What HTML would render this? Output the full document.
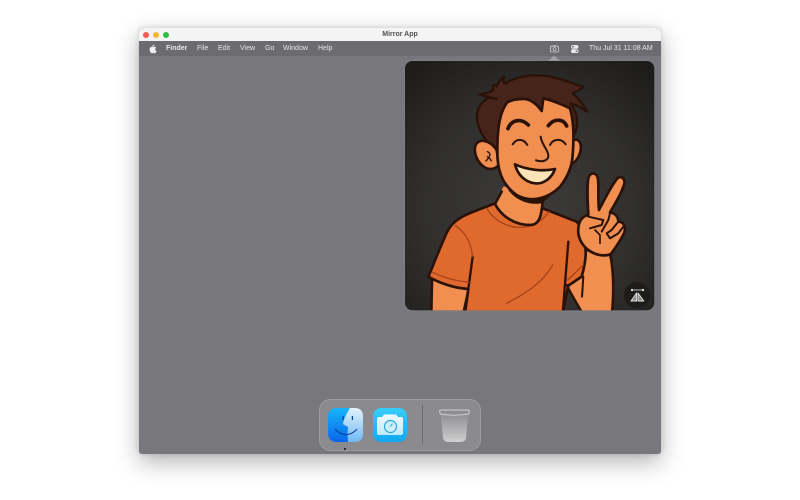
<!DOCTYPE html>
<html><head><meta charset="utf-8">
<style>
html,body{margin:0;padding:0;background:#fff;width:800px;height:500px;overflow:hidden}
body{font-family:"Liberation Sans",sans-serif;position:relative}
#win{position:absolute;left:139px;top:28px;width:522px;height:426px;border-radius:5px 5px 3px 3px;box-shadow:0 8px 24px rgba(0,0,0,.3),0 0 6px rgba(0,0,0,.14);background:#77777c;overflow:hidden}
#title{position:absolute;left:0;top:0;width:522px;height:13px;background:#f4f4f4;text-align:center;font-size:7px;line-height:13px;font-weight:bold;color:#505050}
.dot{position:absolute;top:3.500px;width:6.500px;height:6.500px;border-radius:50%}
#bar{position:absolute;left:0;top:13px;width:522px;height:15px;background:#6b6b70}
.m{position:absolute;top:0;line-height:15px;font-size:7px;color:#e6e6e6;white-space:nowrap}
svg{position:absolute;left:0;top:0}
</style></head><body>
<div id="win">
<div id="title">Mirror App
<span class="dot" style="left:3.500px;background:#f25a52"></span>
<span class="dot" style="left:13.500px;background:#f6b52e"></span>
<span class="dot" style="left:23.500px;background:#2cc13f"></span>
</div>
<div id="bar">
<span class="m" style="left:27px;font-weight:bold">Finder</span>
<span class="m" style="left:58px">File</span>
<span class="m" style="left:79px">Edit</span>
<span class="m" style="left:101px">View</span>
<span class="m" style="left:126px">Go</span>
<span class="m" style="left:144px">Window</span>
<span class="m" style="left:179px">Help</span>
<span class="m" style="left:450px">Thu Jul 31 11:08 AM</span>
</div>
</div>
<svg width="800" height="500" viewBox="0 0 800 500">
<defs>
<radialGradient id="bg" cx=".5" cy=".6" r=".72"><stop offset="0" stop-color="#3d3c3a"/><stop offset=".6" stop-color="#302f2d"/><stop offset="1" stop-color="#1e1d1c"/></radialGradient>
<linearGradient id="fl" x1="0" y1="0" x2="0" y2="1"><stop offset="0" stop-color="#18b4fa"/><stop offset="1" stop-color="#0a66ea"/></linearGradient>
<linearGradient id="fr" x1="0" y1="0" x2="0" y2="1"><stop offset="0" stop-color="#e4f2fb"/><stop offset="1" stop-color="#6fbaf4"/></linearGradient>
<linearGradient id="cm" x1="0" y1="0" x2="0" y2="1"><stop offset="0" stop-color="#38cefb"/><stop offset="1" stop-color="#12a8f0"/></linearGradient>
<linearGradient id="cb" x1="0" y1="0" x2="0" y2="1"><stop offset="0" stop-color="#f0fbff"/><stop offset="1" stop-color="#bfeafb"/></linearGradient>
<linearGradient id="tr" x1="0" y1="0" x2="0" y2="1"><stop offset="0" stop-color="#8a8a8e"/><stop offset="1" stop-color="#cfcfd0"/></linearGradient>
<clipPath id="card"><rect x="15" y="18" width="748" height="748" rx="22"/></clipPath>
</defs>
<!-- apple -->
<g transform="translate(152.800 49) scale(.85) translate(-152.800 -49.500)"><path d="M153.900 46.200c.5-.6.8-1.200.7-1.900-.6.100-1.300.4-1.700 1-.3.500-.6 1.200-.5 1.800.6 0 1.100-.3 1.500-.9zM155.700 49.700c0-1.100.9-1.700 1-1.800-.6-.8-1.400-.9-1.700-.9-.7-.1-1.400.4-1.800.4s-1-.4-1.600-.4c-.9 0-1.700.5-2.100 1.200-.9 1.600-.2 3.900.7 5.100.4.600.9 1.300 1.600 1.300.6 0 .9-.4 1.600-.4s1 .4 1.600.4c.7 0 1.100-.6 1.500-1.200.5-.7.700-1.300.7-1.400-.1 0-1.500-.6-1.500-1.800z" fill="#f2f2f2"/></g>
<!-- camera menu icon -->
<rect x="550.500" y="46.200" width="8" height="5.800" rx="1.200" fill="none" stroke="#cfcfd0" stroke-width=".8"/>
<circle cx="554.500" cy="49.100" r="1.500" fill="none" stroke="#cfcfd0" stroke-width=".7"/>
<rect x="552.800" y="45.300" width="3.400" height="1" fill="#cfcfd0"/>
<path d="M548 61L554 55.500L560 61Z" fill="#a2a2a6"/>
<!-- control centre -->
<rect x="571" y="45" width="7.500" height="3.700" rx="1.800" fill="#e8e8e8"/>
<rect x="571" y="49.300" width="7.500" height="3.700" rx="1.800" fill="#e8e8e8"/>
<circle cx="572.900" cy="46.800" r=".9" fill="#6a6a6f"/>
<circle cx="576.600" cy="51.100" r=".9" fill="#6a6a6f"/>

<!-- card -->
<g transform="translate(400 55) scale(.33333)">
<rect x="12" y="15" width="754" height="754" rx="24" fill="#8a8a8f" opacity=".45"/>
<rect x="15" y="18" width="748" height="748" rx="22" fill="url(#bg)"/>
<g clip-path="url(#card)" stroke-linejoin="round" stroke-linecap="round">
<!-- left arm -->
<path d="M96 672L94 775L190 775L208 695Z" fill="#f08f50" stroke="#2a1209" stroke-width="8"/>
<!-- right arm -->
<path d="M500 690C515 720 530 745 548 775L636 775C642 710 642 650 630 595L560 590Z" fill="#f08f50"/>
<!-- shirt -->
<path d="M285 445L215 472C175 488 150 505 135 545C115 590 100 630 85 665C120 685 165 700 205 702L195 775L488 775L505 692L545 665C552 640 558 610 557 590C555 545 545 515 530 500L428 460Z" fill="#e0692d" stroke="#2a1209" stroke-width="8"/>
<path d="M505 560L488 775" stroke="#2a1209" stroke-width="7" fill="none"/>
<path d="M218 605L205 702" stroke="#2a1209" stroke-width="7" fill="none"/>
<path d="M166 512C195 530 215 565 217 605" stroke="#a8431a" stroke-width="4" fill="none"/>
<path d="M98 652C130 668 170 678 207 682" stroke="#a8431a" stroke-width="4" fill="none"/>
<path d="M503 675L550 630" stroke="#a8431a" stroke-width="4" fill="none"/>
<path d="M320 745C380 715 430 680 458 630" stroke="#a8431a" stroke-width="4" fill="none"/>
<path d="M262 462C290 515 390 550 447 470" stroke="#a8431a" stroke-width="4" fill="none"/>
<!-- neck -->
<path d="M310 395L285 447C305 485 345 510 390 510C420 508 425 480 428 440L440 400Z" fill="#f08f50"/>
<path d="M305 410L285 447C305 485 345 510 390 510C418 510 424 485 428 440" fill="none" stroke="#2a1209" stroke-width="8"/>
<path d="M325 405C350 440 395 452 428 444L470 405L340 385Z" fill="#2a1209"/>
<!-- hair back -->
<path d="M290 132L238 118C258 116 270 112 280 106C274 94 280 84 290 94C296 80 304 70 312 64C308 78 310 85 318 85C345 65 390 58 430 62C470 65 515 85 550 96C540 105 528 110 518 115C535 130 552 150 562 170C548 160 530 150 512 145C530 170 538 200 525 235L290 288C258 262 232 225 230 185C232 160 245 140 265 128Z" fill="#47241a" stroke="#2a1209" stroke-width="7"/>
<!-- ears -->
<path d="M290 285C270 255 240 250 228 268C215 295 240 340 270 342C280 342 290 338 297 330Z" fill="#f08f50" stroke="#2a1209" stroke-width="8"/>
<path d="M262 290C275 295 270 305 258 318M262 305C268 308 272 312 274 318" fill="none" stroke="#2a1209" stroke-width="4"/>
<path d="M520 255C538 250 545 265 542 285C538 305 528 322 515 326Z" fill="#f08f50" stroke="#2a1209" stroke-width="8"/>
<!-- face -->
<path d="M322 142C300 170 292 215 292 290C292 335 300 385 350 420C395 445 445 430 480 395C500 370 516 340 518 300C522 250 522 200 510 160C480 145 450 135 430 130L425 168C405 140 385 130 365 132C350 132 335 135 322 142Z" fill="#f08f50" stroke="#2a1209" stroke-width="8"/>
<!-- brows -->
<path d="M324 221C335 192 365 190 385 210" fill="none" stroke="#2a1209" stroke-width="11"/>
<path d="M445 212C462 190 490 190 500 213" fill="none" stroke="#2a1209" stroke-width="11"/>
<!-- eyes -->
<path d="M338 268C350 250 370 250 382 270" fill="none" stroke="#2a1209" stroke-width="6"/>
<path d="M450 270C460 250 485 250 497 268" fill="none" stroke="#2a1209" stroke-width="6"/>
<!-- nose -->
<path d="M422 245C425 270 445 285 445 302C445 318 425 322 408 316" fill="none" stroke="#2a1209" stroke-width="6"/>
<!-- mouth -->
<path d="M345 328C380 345 430 350 465 342C455 370 430 388 405 385C375 382 352 358 345 328Z" fill="#fbe3b8" stroke="#2a1209" stroke-width="8"/>
<!-- right arm outline -->
<path d="M500 690C515 720 530 745 548 775" fill="none" stroke="#2a1209" stroke-width="7"/>
<path d="M550 665L546 725" fill="none" stroke="#2a1209" stroke-width="6"/>
<path d="M636 775C642 710 642 650 630 595" fill="none" stroke="#2a1209" stroke-width="8"/>
<!-- hand -->
<path d="M565 480C563 440 560 400 565 370C570 350 590 350 594 372C597 400 593 435 597 465C615 430 635 390 652 370C665 358 680 375 670 395C660 425 642 450 630 472C645 475 655 485 655 500C670 500 680 515 672 535C660 560 645 580 632 598C610 605 585 600 565 585C545 570 532 545 535 520C537 495 550 482 565 480Z" fill="#f08f50" stroke="#2a1209" stroke-width="8"/>
<path d="M565 485L610 495L605 510L570 520" fill="none" stroke="#2a1209" stroke-width="6"/>
<path d="M585 525L600 540L600 565" fill="none" stroke="#2a1209" stroke-width="5"/>
<path d="M630 475L625 495L605 530" fill="none" stroke="#2a1209" stroke-width="6"/>
<path d="M655 500L635 525L620 535L630 550L655 535L670 515" fill="none" stroke="#2a1209" stroke-width="6"/>
</g>
</g>
<!-- overlay button -->
<circle cx="637" cy="295" r="13" fill="#1d1c1b"/>
<path d="M632 290H643" stroke="#e0e0e0" stroke-width=".8"/>
<circle cx="632" cy="290" r="1.100" fill="#eee"/><circle cx="643" cy="290" r="1.100" fill="#eee"/>
<path d="M636.600 293L631 301H636.600ZM638 293L643.800 301H638Z" fill="#8a8a8a" stroke="#e6e6e6" stroke-width=".9" stroke-linejoin="round"/>
<!-- dock -->
<rect x="319.500" y="399.500" width="161" height="51" rx="11" fill="#8b8b8f" stroke="#9c9ca0" stroke-width="1"/>
<!-- finder -->
<rect x="328" y="408" width="35" height="34" rx="8" fill="url(#fl)"/>
<path d="M350 408H355C360 408 363 411 363 416V434C363 439 360 442 355 442H348C347.500 437 347.500 432 348 427L343 424C344 418 347 413 350 408Z" fill="url(#fr)"/>
<path d="M335 429C342 437 351 436 357 429" fill="none" stroke="#0b3e96" stroke-width="1"/>
<rect x="342.500" y="416" width="1.200" height="4" fill="#0b3e96"/>
<rect x="351.800" y="416" width="1.200" height="4" fill="#0b3e96"/>
<circle cx="345" cy="449" r="1" fill="#111"/>
<!-- camera app -->
<rect x="373" y="408" width="34" height="34" rx="8" fill="url(#cm)"/>
<path d="M379 417H382L384 414.500H396L398 417H401C402.500 417 403 418 403 419V433C403 434.500 402 435 401 435H379C377.500 435 377 434 377 433V419C377 418 378 417 379 417Z" fill="url(#cb)"/>
<circle cx="390.500" cy="426.500" r="6" fill="#cdeffb" stroke="#2aa6de" stroke-width="1.200"/>
<path d="M390.500 426.500L392.500 423.500" stroke="#2aa6de" stroke-width="1"/>
<!-- divider -->
<rect x="422" y="405" width="1" height="39" fill="#6e6e72"/>
<!-- trash -->
<path d="M440.500 412L443 438C443.500 441 446 442 449 442H460C463 442 465.500 441 466 438L468.500 412Z" fill="url(#tr)"/>
<path d="M439.500 411.500C439.500 410.500 440.500 410 441.500 410H467.500C468.500 410 469.500 410.500 469.500 411.500L468.500 414C460 415.500 449 415.500 440.500 414Z" fill="#8f8f93" stroke="#cfcfd1" stroke-width="1"/>
</svg>
</body></html>
